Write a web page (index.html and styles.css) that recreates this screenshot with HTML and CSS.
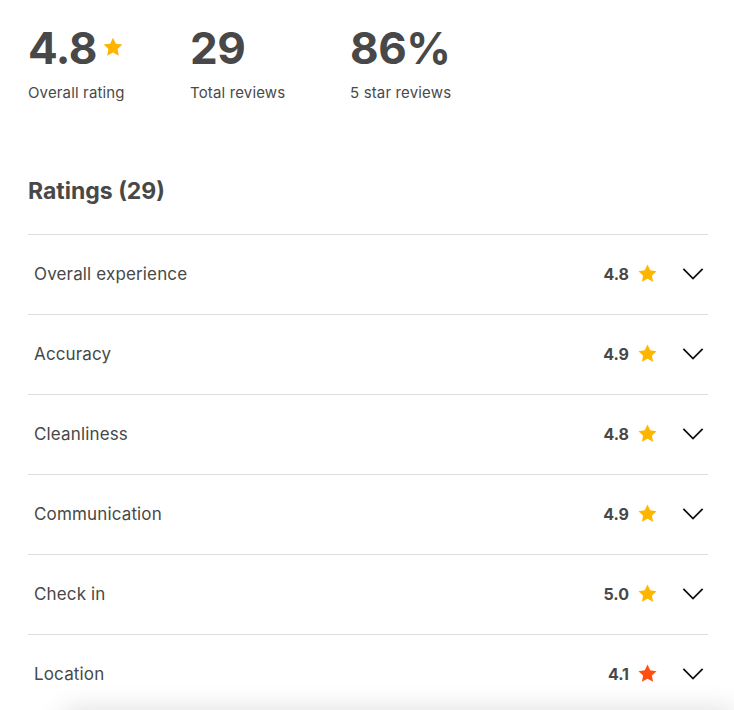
FILE: index.html
```html
<!DOCTYPE html>
<html>
<head>
<meta charset="utf-8">
<link rel="stylesheet" href="styles.css">
</head>
<body>
<div class="page">
  <section class="stats">
    <div class="stat stat-1">
      <div class="big">4.8 <svg class="star-big" viewBox="0 0 24 24"><path d="M12 1.8l3.1 6.6 7.2.9-5.3 5 1.4 7.2L12 18l-6.4 3.5L7 14.3l-5.3-5 7.2-.9z" fill="#FFB400"/></svg></div>
      <div class="label">Overall rating</div>
    </div>
    <div class="stat stat-2">
      <div class="big">29</div>
      <div class="label">Total reviews</div>
    </div>
    <div class="stat">
      <div class="big">86%</div>
      <div class="label">5 star reviews</div>
    </div>
  </section>

  <h2 class="heading">Ratings (29)</h2>

  <ul class="list">
    <li class="row"><span class="name">Overall experience</span><span class="score">4.8</span><svg class="star" viewBox="0 0 24 24"><path d="M12 1.8l3.1 6.6 7.2.9-5.3 5 1.4 7.2L12 18l-6.4 3.5L7 14.3l-5.3-5 7.2-.9z" fill="#FFB400"/></svg><svg class="chev" viewBox="0 0 24 14"><path d="M1.5 2l10.5 10.5L22.5 2" fill="none" stroke="#111" stroke-width="2"/></svg></li>
    <li class="row"><span class="name">Accuracy</span><span class="score">4.9</span><svg class="star" viewBox="0 0 24 24"><path d="M12 1.8l3.1 6.6 7.2.9-5.3 5 1.4 7.2L12 18l-6.4 3.5L7 14.3l-5.3-5 7.2-.9z" fill="#FFB400"/></svg><svg class="chev" viewBox="0 0 24 14"><path d="M1.5 2l10.5 10.5L22.5 2" fill="none" stroke="#111" stroke-width="2"/></svg></li>
    <li class="row"><span class="name">Cleanliness</span><span class="score">4.8</span><svg class="star" viewBox="0 0 24 24"><path d="M12 1.8l3.1 6.6 7.2.9-5.3 5 1.4 7.2L12 18l-6.4 3.5L7 14.3l-5.3-5 7.2-.9z" fill="#FFB400"/></svg><svg class="chev" viewBox="0 0 24 14"><path d="M1.5 2l10.5 10.5L22.5 2" fill="none" stroke="#111" stroke-width="2"/></svg></li>
    <li class="row"><span class="name">Communication</span><span class="score">4.9</span><svg class="star" viewBox="0 0 24 24"><path d="M12 1.8l3.1 6.6 7.2.9-5.3 5 1.4 7.2L12 18l-6.4 3.5L7 14.3l-5.3-5 7.2-.9z" fill="#FFB400"/></svg><svg class="chev" viewBox="0 0 24 14"><path d="M1.5 2l10.5 10.5L22.5 2" fill="none" stroke="#111" stroke-width="2"/></svg></li>
    <li class="row"><span class="name">Check in</span><span class="score">5.0</span><svg class="star" viewBox="0 0 24 24"><path d="M12 1.8l3.1 6.6 7.2.9-5.3 5 1.4 7.2L12 18l-6.4 3.5L7 14.3l-5.3-5 7.2-.9z" fill="#FFB400"/></svg><svg class="chev" viewBox="0 0 24 14"><path d="M1.5 2l10.5 10.5L22.5 2" fill="none" stroke="#111" stroke-width="2"/></svg></li>
    <li class="row"><span class="name">Location</span><span class="score">4.1</span><svg class="star" viewBox="0 0 24 24"><path d="M12 1.8l3.1 6.6 7.2.9-5.3 5 1.4 7.2L12 18l-6.4 3.5L7 14.3l-5.3-5 7.2-.9z" fill="#FF4F10"/></svg><svg class="chev" viewBox="0 0 24 14"><path d="M1.5 2l10.5 10.5L22.5 2" fill="none" stroke="#111" stroke-width="2"/></svg></li>
  </ul>
</div>
<div class="bottom-sheet"></div>
</body>
</html>
```

FILE: styles.css
```css
html, body {
  margin: 0;
  padding: 0;
  background: #fff;
  overflow: hidden;
}
body {
  font-family: "Inter", "Liberation Sans", sans-serif;
  color: #484848;
  height: 710px;
}
.page {
  padding: 22px 26px 0 28px;
}
.stats {
  display: flex;
}
.stat-1 { width: 162px; }
.stat-2 { width: 160px; }
.big {
  font-size: 44px;
  font-weight: 700;
  line-height: 52px;
  letter-spacing: -0.5px;
  display: flex;
  align-items: center;
}
.star-big {
  width: 22px;
  height: 22px;
  margin-left: 5px;
  margin-top: -2px;
}
.label {
  font-size: 15px;
  line-height: 20px;
  margin-top: 9px;
  letter-spacing: 0.15px;
  color: #4a4a4a;
}
.heading {
  margin: 74px 0 0;
  font-size: 23px;
  line-height: 28px;
  font-weight: 700;
  color: #484848;
}
.list {
  list-style: none;
  margin: 29px 0 0;
  padding: 0;
}
.row {
  box-sizing: border-box;
  height: 80px;
  border-top: 1px solid #dddddd;
  display: flex;
  align-items: center;
  padding: 0 4px 2px 6px;
}
.name {
  flex: 1;
  font-size: 17px;
  letter-spacing: 0.15px;
  color: #484848;
}
.score {
  font-size: 16px;
  font-weight: 700;
  color: #484848;
}
.star {
  width: 21px;
  height: 21px;
  margin-left: 8px;
}
.chev {
  width: 22px;
  height: 13px;
  margin-left: 24px;
}
.bottom-sheet {
  position: fixed;
  left: 60px;
  right: 0;
  top: 714px;
  height: 60px;
  background: #fff;
  border-radius: 16px 0 0 0;
  box-shadow: 0 -6px 26px rgba(0,0,0,0.12);
}
```
